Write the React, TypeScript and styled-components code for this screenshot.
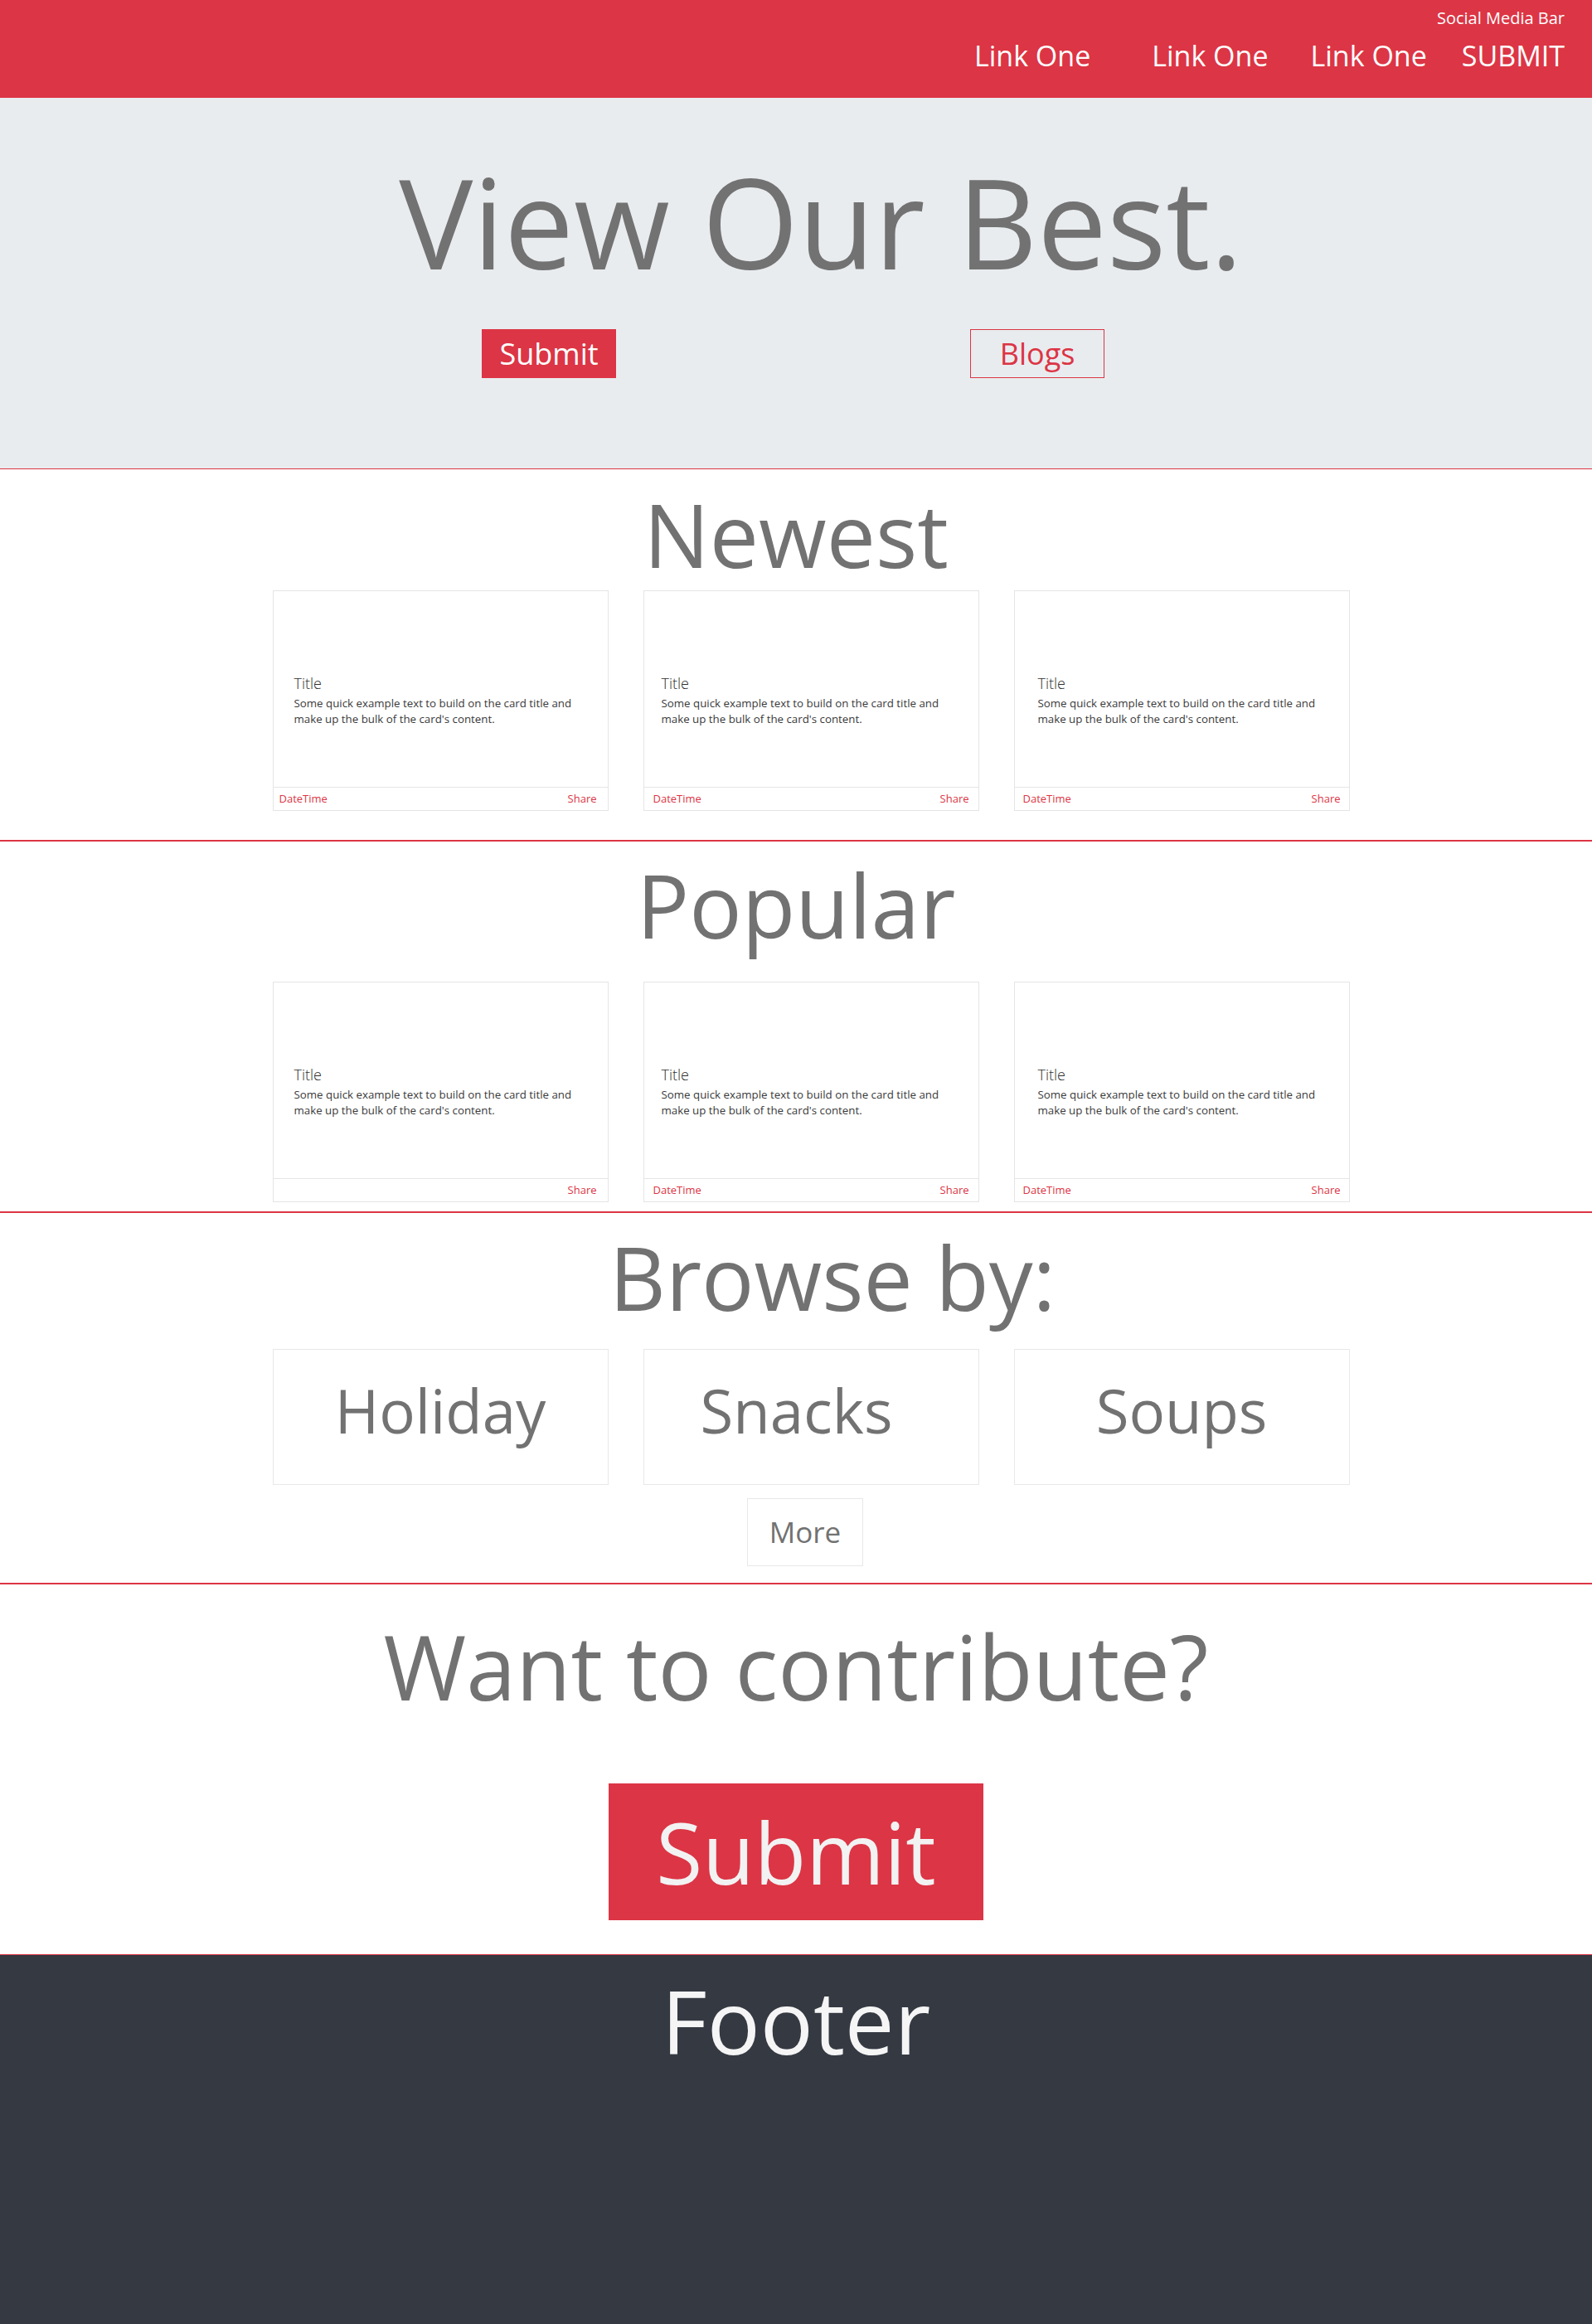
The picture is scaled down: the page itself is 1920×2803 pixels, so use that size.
import React from "react";
import styled, { createGlobalStyle } from "styled-components";

const RED = "#dc3545";
const GREY = "#727272";

const Global = createGlobalStyle`
  * { box-sizing: border-box; }
  html, body { margin: 0; padding: 0; }
  body {
    font-family: "Open Sans", "Noto Sans", "Liberation Sans", sans-serif;
    background: #ffffff;
  }
`;

const Page = styled.div`
  width: 1920px;
  display: flex;
  flex-direction: column;
`;

const Header = styled.header`
  height: 118px;
  background: ${RED};
  color: #ffffff;
  display: flex;
  flex-direction: column;
  align-items: flex-end;
  padding: 9.5px 33px 0 0;
`;

const Social = styled.div`
  font-size: 20px;
  line-height: 24px;
`;

const Nav = styled.nav`
  display: flex;
  margin-top: 13px;
`;

const NavLink = styled.a<{ $ml: number }>`
  font-size: 34px;
  line-height: 40.8px;
  color: #ffffff;
  text-decoration: none;
  margin-left: ${(p) => p.$ml}px;
`;

const Section = styled.section<{ $h: number; $bg?: string; $bw: number; $pt: number }>`
  height: ${(p) => p.$h}px;
  background: ${(p) => p.$bg || "#ffffff"};
  border-bottom: ${(p) => p.$bw}px solid ${RED};
  padding-top: ${(p) => p.$pt}px;
  display: flex;
  flex-direction: column;
  align-items: center;
`;

const HeroTitle = styled.h1`
  margin: 0;
  font-size: 149.5px;
  line-height: 175px;
  font-weight: 400;
  color: ${GREY};
  padding-left: 60px;
  white-space: nowrap;
`;

const HeroButtons = styled.div`
  display: grid;
  grid-template-columns: 589px 589px;
  justify-content: center;
  width: 100%;
  padding-right: 7px;
  margin-top: 42px;
`;

const HeroCell = styled.div`
  display: flex;
  justify-content: center;
`;

const HeroButton = styled.a<{ $outline?: boolean }>`
  width: 162px;
  height: 59px;
  display: flex;
  align-items: center;
  justify-content: center;
  font-size: 36px;
  line-height: 43px;
  text-decoration: none;
  border: 1px solid ${RED};
  background: ${(p) => (p.$outline ? "transparent" : RED)};
  color: ${(p) => (p.$outline ? RED : "#ffffff")};
`;

const Heading = styled.h2<{ $pl?: number; $color?: string; $size?: number }>`
  margin: 0;
  font-size: ${(p) => p.$size || 105.5}px;
  line-height: 123.6px;
  font-weight: 400;
  color: ${(p) => p.$color || GREY};
  padding-left: ${(p) => p.$pl || 0}px;
  white-space: nowrap;
`;

const CardRow = styled.div<{ $mt: number }>`
  display: grid;
  grid-template-columns: repeat(3, 405px);
  column-gap: 42px;
  justify-content: center;
  width: 100%;
  padding-left: 36px;
  margin-top: ${(p) => p.$mt}px;
`;

const Card = styled.article`
  height: 266px;
  border: 1px solid #e5e5e5;
  display: flex;
  flex-direction: column;
  background: #ffffff;
`;

const CardBody = styled.div<{ $pl: number }>`
  flex: 1;
  padding: 101px 20px 0 ${(p) => p.$pl}px;
`;

const CardTitle = styled.h5`
  margin: 0;
  font-size: 18px;
  line-height: 21px;
  font-weight: 300;
  color: #2f2f2f;
`;

const CardText = styled.p`
  margin: 4.5px 0 0 0;
  font-size: 13.3px;
  line-height: 19px;
  font-weight: 400;
  color: #3a3a3a;
`;

const CardFooter = styled.div<{ $pl: number; $pr: number }>`
  border-top: 1px solid #e5e5e5;
  padding: 3.5px ${(p) => p.$pr}px 3.5px ${(p) => p.$pl}px;
  display: flex;
  font-size: 13px;
  line-height: 19.5px;
  color: ${RED};
`;

const Share = styled.span`
  margin-left: auto;
`;

const Category = styled.a<{ $offset?: number }>`
  height: 164px;
  border: 1px solid #e8e8e8;
  display: flex;
  align-items: center;
  justify-content: center;
  padding-bottom: 15px;
  padding-right: ${(p) => p.$offset || 0}px;
  font-size: 72.5px;
  line-height: 85px;
  color: ${GREY};
  text-decoration: none;
`;

const MoreRow = styled.div`
  display: flex;
  justify-content: center;
  width: 100%;
  padding-left: 22px;
  margin-top: 16px;
`;

const MoreButton = styled.a`
  width: 140px;
  height: 82px;
  border: 1px solid #e8e8e8;
  display: flex;
  align-items: center;
  justify-content: center;
  font-size: 35px;
  line-height: 42px;
  color: ${GREY};
  text-decoration: none;
`;

const BigSubmit = styled.a`
  margin-top: 79px;
  width: 452px;
  height: 165px;
  background: ${RED};
  color: #f2f2f2;
  display: flex;
  align-items: center;
  justify-content: center;
  padding-top: 2px;
  font-size: 102px;
  line-height: 118px;
  text-decoration: none;
`;

const Footer = styled.footer`
  height: 445px;
  background: #353942;
  padding-top: 17.4px;
  display: flex;
  flex-direction: column;
  align-items: center;
`;

type CardProps = { date?: boolean; bodyPad: number; footL: number; footR: number };

const text = "Some quick example text to build on the card title and make up the bulk of the card's content.";

function PostCard({ date = true, bodyPad, footL, footR }: CardProps) {
  return (
    <Card>
      <CardBody $pl={bodyPad}>
        <CardTitle>Title</CardTitle>
        <CardText>{text}</CardText>
      </CardBody>
      <CardFooter $pl={footL} $pr={footR}>
        {date && <span>DateTime</span>}
        <Share>Share</Share>
      </CardFooter>
    </Card>
  );
}

const cardLayout = [
  { bodyPad: 25, footL: 7, footR: 13 },
  { bodyPad: 21, footL: 11, footR: 11 },
  { bodyPad: 28, footL: 10, footR: 10 },
];

export default function App() {
  return (
    <Page>
      <Global />
      <Header>
        <Social>Social Media Bar</Social>
        <Nav>
          <NavLink href="#" $ml={0}>Link One</NavLink>
          <NavLink href="#" $ml={74}>Link One</NavLink>
          <NavLink href="#" $ml={51}>Link One</NavLink>
          <NavLink href="#" $ml={42}>SUBMIT</NavLink>
        </Nav>
      </Header>

      <Section $h={448} $bw={1} $bg="#e9ecef" $pt={62}>
        <HeroTitle>View Our Best.</HeroTitle>
        <HeroButtons>
          <HeroCell>
            <HeroButton href="#">Submit</HeroButton>
          </HeroCell>
          <HeroCell>
            <HeroButton href="#" $outline>Blogs</HeroButton>
          </HeroCell>
        </HeroButtons>
      </Section>

      <Section $h={449} $bw={2} $pt={17.4}>
        <Heading>Newest</Heading>
        <CardRow $mt={5}>
          {cardLayout.map((c, i) => (
            <PostCard key={i} {...c} />
          ))}
        </CardRow>
      </Section>

      <Section $h={448} $bw={2} $pt={15}>
        <Heading>Popular</Heading>
        <CardRow $mt={30}>
          {cardLayout.map((c, i) => (
            <PostCard key={i} {...c} date={i !== 0} />
          ))}
        </CardRow>
      </Section>

      <Section $h={448} $bw={2} $pt={16.4}>
        <Heading $pl={88}>Browse by:</Heading>
        <CardRow $mt={24}>
          <Category href="#">Holiday</Category>
          <Category href="#" $offset={35}>Snacks</Category>
          <Category href="#">Soups</Category>
        </CardRow>
        <MoreRow>
          <MoreButton href="#">More</MoreButton>
        </MoreRow>
      </Section>

      <Section $h={447} $bw={1} $pt={37.4}>
        <Heading $size={108}>Want to contribute?</Heading>
        <BigSubmit href="#">Submit</BigSubmit>
      </Section>

      <Footer>
        <Heading $color="#f5f5f5" $size={106.5}>Footer</Heading>
      </Footer>
    </Page>
  );
}
